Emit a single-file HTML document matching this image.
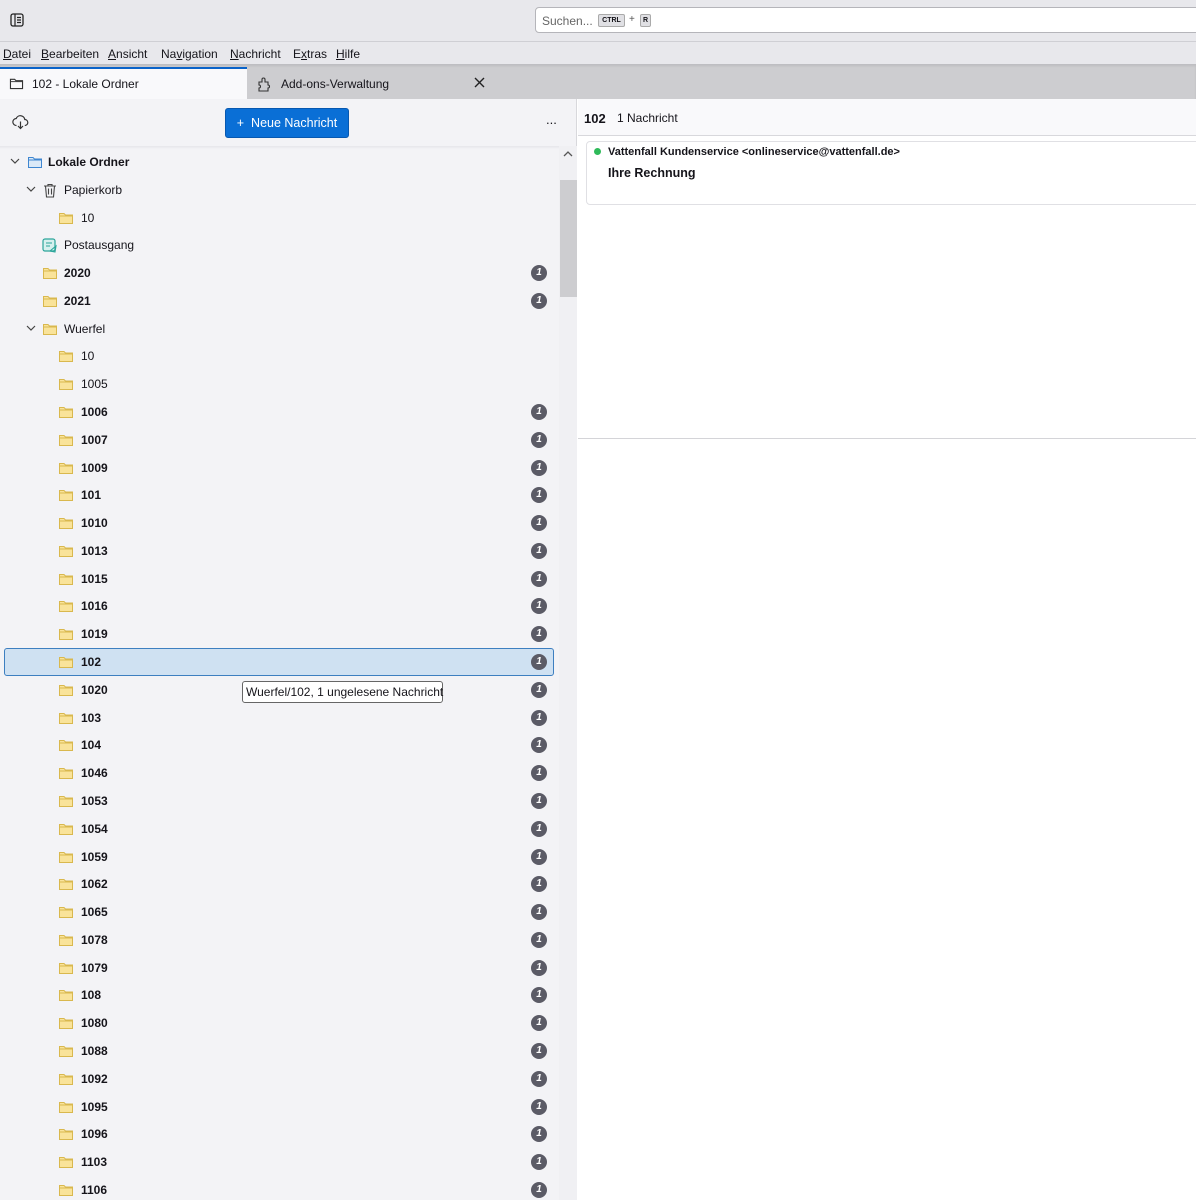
<!DOCTYPE html>
<html><head><meta charset="utf-8"><style>
*{margin:0;padding:0;box-sizing:border-box}
body{width:1196px;height:1200px;overflow:hidden;position:relative;font-family:"Liberation Sans",sans-serif;font-size:12px;color:#15141a;background:#fff}
.abs{position:absolute}
#top{left:0;top:0;width:1196px;height:42px;background:#e8e8ec;border-bottom:1px solid #cfcfd4}
#menu{left:0;top:42px;width:1196px;height:22px;background:#e8e8ec}
#menu span{position:absolute;top:5px;font-size:12px}
#menu u{text-decoration:underline}
#tabs{left:0;top:64px;width:1196px;height:35px;background:#cdcdd0;box-shadow:inset 0 2px 2px rgba(0,0,0,.08)}
#left{left:0;top:99px;width:577px;height:1101px;background:#f3f3f6;border-right:1px solid #d8d8dc}
.r{position:absolute;left:4px;width:549px;height:28px}
.r span{position:absolute;top:7px;font-size:12px}
.r b{font-weight:bold}
.f{position:absolute;top:7px}
.bd{position:absolute;left:527px;top:6px;width:16px;height:16px;border-radius:50%;background:#5b5b66;color:#fff;font-size:10px;font-weight:bold;text-align:center;line-height:16px}
.ch{position:absolute;top:8px}
</style></head><body>
<svg width="0" height="0" style="position:absolute"><defs>
<symbol id="fo" viewBox="0 0 16 14"><path d="M1.5 2.5h4.5l1.5 1.5h7v8.5h-13z" fill="#f9e39a" stroke="#d9b84e"/><path d="M1.5 5h13" stroke="#d9b84e"/></symbol>
<symbol id="chv" viewBox="0 0 10 10"><path d="M1 3l4 4 4-4" fill="none" stroke="#444" stroke-width="1.2"/></symbol>
</defs></svg>

<div id="top" class="abs">
<svg class="abs" style="left:10px;top:13px" width="14" height="14" viewBox="0 0 14 14"><rect x="1" y="1" width="12" height="12" rx="2" fill="none" stroke="#222" stroke-width="1.3"/><path d="M5 1v12M7 4.5h4M7 7h4M7 9.5h4" stroke="#222" stroke-width="1.2"/></svg>
<div class="abs" style="left:535px;top:7px;width:670px;height:26px;background:#fff;border:1px solid #b5b5ba;border-radius:4px">
<span class="abs" style="left:6px;top:6px;color:#666;font-size:12px">Suchen...</span>
<span class="abs" style="left:62px;top:6px;width:27px;height:13px;background:#e0e0e4;border:1px solid #aaa;border-radius:2px;font-size:7px;font-weight:bold;text-align:center;line-height:11px">CTRL</span>
<span class="abs" style="left:93px;top:6px;font-size:10px;color:#555">+</span>
<span class="abs" style="left:104px;top:6px;width:11px;height:13px;background:#e0e0e4;border:1px solid #aaa;border-radius:2px;font-size:7px;font-weight:bold;text-align:center;line-height:11px">R</span>
</div>
</div>
<div id="menu" class="abs">
<span style="left:3px"><u>D</u>atei</span><span style="left:41px"><u>B</u>earbeiten</span><span style="left:108px"><u>A</u>nsicht</span><span style="left:161px">Na<u>v</u>igation</span><span style="left:230px"><u>N</u>achricht</span><span style="left:293px">E<u>x</u>tras</span><span style="left:336px"><u>H</u>ilfe</span>
</div>
<div id="tabs" class="abs">
<div class="abs" style="left:0;top:3px;width:247px;height:32px;background:#f9f9fb;border-top:2px solid #0a63c9"></div>
<svg class="abs" style="left:9px;top:77px;position:fixed" width="15" height="13" viewBox="0 0 16 14"><path d="M1.5 2.5h4.5l1.5 1.5h7v8.5h-13z" fill="none" stroke="#333" stroke-width="1.2"/><path d="M1.5 5h13" stroke="#333"/></svg>
<span class="abs" style="left:32px;top:13px">102 - Lokale Ordner</span>
<svg class="abs" style="left:257px;top:12px" width="17" height="16" viewBox="0 0 17 16"><path d="M2 6h3V3.5a1.5 1.5 0 013 0V6h3v3a1.5 1.5 0 010 3v3H2v-3a1.5 1.5 0 000-3z" fill="none" stroke="#333" stroke-width="1.1"/></svg>
<span class="abs" style="left:281px;top:13px">Add-ons-Verwaltung</span>
<svg class="abs" style="left:474px;top:13px" width="11" height="11" viewBox="0 0 11 11"><path d="M1 1l9 9M10 1l-9 9" stroke="#222" stroke-width="1.4"/></svg>
</div>

<div id="left" class="abs">
<svg class="abs" style="left:12px;top:16px" width="17" height="15" viewBox="0 0 17 15"><path d="M4.5 10.5a3.5 3.5 0 01-.3-7 4.5 4.5 0 018.6 1 2.8 2.8 0 010 6" fill="none" stroke="#333" stroke-width="1.2"/><path d="M8.5 6.5v7M6 11l2.5 2.5L11 11" fill="none" stroke="#333" stroke-width="1.2"/></svg>
<div class="abs" style="left:225px;top:9px;width:124px;height:30px;background:#0a6fd6;border:1px solid #0758b0;border-radius:3px;color:#fff;font-size:12.5px;line-height:28px;text-align:center">+&nbsp;&nbsp;Neue Nachricht</div>
<span class="abs" style="left:546px;top:13px;font-size:13px">...</span>
<div class="abs" style="left:0;top:47px;width:559px;height:3px;background:linear-gradient(#e6e6ea,#f3f3f6)"></div>
<div class="abs" style="left:559px;top:47px;width:18px;height:1054px;background:#f0f0f3"></div>
<svg class="abs" style="left:563px;top:51px" width="10" height="8" viewBox="0 0 10 8"><path d="M1 6l4-4 4 4" fill="none" stroke="#555" stroke-width="1.3"/></svg>
<div class="abs" style="left:560px;top:81px;width:17px;height:117px;background:#cdcdd0"></div>
</div>

<div class="abs" style="left:4px;top:648px;width:550px;height:28px;background:#cfe1f2;border:1px solid #3d7fc0;border-radius:3px"></div>

<div class="r" style="top:148px"><svg class="ch" style="left:6px" width="10" height="10"><use href="#chv"/></svg><svg class="f" style="left:23px" width="16" height="14" viewBox="0 0 16 14"><path d="M1.5 2.5h4.5l1.5 1.5h7v8.5h-13z" fill="#dbe9f7" stroke="#3f86d0"/><path d="M1.5 5h13" stroke="#3f86d0"/></svg><span style="left:44px"><b>Lokale Ordner</b></span></div>
<div class="r" style="top:176px"><svg class="ch" style="left:22px" width="10" height="10"><use href="#chv"/></svg><svg class="f" style="left:39px" width="14" height="15" viewBox="0 0 14 15"><path d="M1 3h12M5 3V1.5h4V3M2.5 3l1 11h7l1-11M5.5 5.5v6M8.5 5.5v6" fill="none" stroke="#444" stroke-width="1.1"/></svg><span style="left:60px">Papierkorb</span></div>
<div class="r" style="top:204px"><svg class="f" style="left:54px" width="16" height="14"><use href="#fo"/></svg><span style="left:77px">10</span></div>
<div class="r" style="top:231px"><svg class="f" style="left:38px" width="16" height="15" viewBox="0 0 16 15"><rect x="1" y="1" width="12" height="12" rx="2" fill="#d6f0ee" stroke="#2ba59a" stroke-width="1.2"/><path d="M4 5h6M4 8h4M8 13l6-5-1 6z" fill="none" stroke="#2ba59a" stroke-width="1.1"/></svg><span style="left:60px">Postausgang</span></div>
<div class="r" style="top:259px"><svg class="f" style="left:38px" width="16" height="14"><use href="#fo"/></svg><span style="left:60px"><b>2020</b></span><i class="bd">1</i></div>
<div class="r" style="top:287px"><svg class="f" style="left:38px" width="16" height="14"><use href="#fo"/></svg><span style="left:60px"><b>2021</b></span><i class="bd">1</i></div>
<div class="r" style="top:315px"><svg class="ch" style="left:22px" width="10" height="10"><use href="#chv"/></svg><svg class="f" style="left:38px" width="16" height="14"><use href="#fo"/></svg><span style="left:60px">Wuerfel</span></div>
<div class="r" style="top:342px"><svg class="f" style="left:54px" width="16" height="14"><use href="#fo"/></svg><span style="left:77px">10</span></div>
<div class="r" style="top:370px"><svg class="f" style="left:54px" width="16" height="14"><use href="#fo"/></svg><span style="left:77px">1005</span></div>
<div class="r" style="top:398px"><svg class="f" style="left:54px" width="16" height="14"><use href="#fo"/></svg><span style="left:77px"><b>1006</b></span><i class="bd">1</i></div>
<div class="r" style="top:426px"><svg class="f" style="left:54px" width="16" height="14"><use href="#fo"/></svg><span style="left:77px"><b>1007</b></span><i class="bd">1</i></div>
<div class="r" style="top:454px"><svg class="f" style="left:54px" width="16" height="14"><use href="#fo"/></svg><span style="left:77px"><b>1009</b></span><i class="bd">1</i></div>
<div class="r" style="top:481px"><svg class="f" style="left:54px" width="16" height="14"><use href="#fo"/></svg><span style="left:77px"><b>101</b></span><i class="bd">1</i></div>
<div class="r" style="top:509px"><svg class="f" style="left:54px" width="16" height="14"><use href="#fo"/></svg><span style="left:77px"><b>1010</b></span><i class="bd">1</i></div>
<div class="r" style="top:537px"><svg class="f" style="left:54px" width="16" height="14"><use href="#fo"/></svg><span style="left:77px"><b>1013</b></span><i class="bd">1</i></div>
<div class="r" style="top:565px"><svg class="f" style="left:54px" width="16" height="14"><use href="#fo"/></svg><span style="left:77px"><b>1015</b></span><i class="bd">1</i></div>
<div class="r" style="top:592px"><svg class="f" style="left:54px" width="16" height="14"><use href="#fo"/></svg><span style="left:77px"><b>1016</b></span><i class="bd">1</i></div>
<div class="r" style="top:620px"><svg class="f" style="left:54px" width="16" height="14"><use href="#fo"/></svg><span style="left:77px"><b>1019</b></span><i class="bd">1</i></div>
<div class="r" style="top:648px"><svg class="f" style="left:54px" width="16" height="14"><use href="#fo"/></svg><span style="left:77px"><b>102</b></span><i class="bd">1</i></div>
<div class="r" style="top:676px"><svg class="f" style="left:54px" width="16" height="14"><use href="#fo"/></svg><span style="left:77px"><b>1020</b></span><i class="bd">1</i></div>
<div class="r" style="top:704px"><svg class="f" style="left:54px" width="16" height="14"><use href="#fo"/></svg><span style="left:77px"><b>103</b></span><i class="bd">1</i></div>
<div class="r" style="top:731px"><svg class="f" style="left:54px" width="16" height="14"><use href="#fo"/></svg><span style="left:77px"><b>104</b></span><i class="bd">1</i></div>
<div class="r" style="top:759px"><svg class="f" style="left:54px" width="16" height="14"><use href="#fo"/></svg><span style="left:77px"><b>1046</b></span><i class="bd">1</i></div>
<div class="r" style="top:787px"><svg class="f" style="left:54px" width="16" height="14"><use href="#fo"/></svg><span style="left:77px"><b>1053</b></span><i class="bd">1</i></div>
<div class="r" style="top:815px"><svg class="f" style="left:54px" width="16" height="14"><use href="#fo"/></svg><span style="left:77px"><b>1054</b></span><i class="bd">1</i></div>
<div class="r" style="top:843px"><svg class="f" style="left:54px" width="16" height="14"><use href="#fo"/></svg><span style="left:77px"><b>1059</b></span><i class="bd">1</i></div>
<div class="r" style="top:870px"><svg class="f" style="left:54px" width="16" height="14"><use href="#fo"/></svg><span style="left:77px"><b>1062</b></span><i class="bd">1</i></div>
<div class="r" style="top:898px"><svg class="f" style="left:54px" width="16" height="14"><use href="#fo"/></svg><span style="left:77px"><b>1065</b></span><i class="bd">1</i></div>
<div class="r" style="top:926px"><svg class="f" style="left:54px" width="16" height="14"><use href="#fo"/></svg><span style="left:77px"><b>1078</b></span><i class="bd">1</i></div>
<div class="r" style="top:954px"><svg class="f" style="left:54px" width="16" height="14"><use href="#fo"/></svg><span style="left:77px"><b>1079</b></span><i class="bd">1</i></div>
<div class="r" style="top:981px"><svg class="f" style="left:54px" width="16" height="14"><use href="#fo"/></svg><span style="left:77px"><b>108</b></span><i class="bd">1</i></div>
<div class="r" style="top:1009px"><svg class="f" style="left:54px" width="16" height="14"><use href="#fo"/></svg><span style="left:77px"><b>1080</b></span><i class="bd">1</i></div>
<div class="r" style="top:1037px"><svg class="f" style="left:54px" width="16" height="14"><use href="#fo"/></svg><span style="left:77px"><b>1088</b></span><i class="bd">1</i></div>
<div class="r" style="top:1065px"><svg class="f" style="left:54px" width="16" height="14"><use href="#fo"/></svg><span style="left:77px"><b>1092</b></span><i class="bd">1</i></div>
<div class="r" style="top:1093px"><svg class="f" style="left:54px" width="16" height="14"><use href="#fo"/></svg><span style="left:77px"><b>1095</b></span><i class="bd">1</i></div>
<div class="r" style="top:1120px"><svg class="f" style="left:54px" width="16" height="14"><use href="#fo"/></svg><span style="left:77px"><b>1096</b></span><i class="bd">1</i></div>
<div class="r" style="top:1148px"><svg class="f" style="left:54px" width="16" height="14"><use href="#fo"/></svg><span style="left:77px"><b>1103</b></span><i class="bd">1</i></div>
<div class="r" style="top:1176px"><svg class="f" style="left:54px" width="16" height="14"><use href="#fo"/></svg><span style="left:77px"><b>1106</b></span><i class="bd">1</i></div>

<div class="abs" style="left:242px;top:681px;width:201px;height:22px;background:#fff;border:1px solid #666;border-radius:3px;font-size:12px;line-height:20px;padding-left:3px;white-space:nowrap">Wuerfel/102, 1 ungelesene Nachricht</div>

<div class="abs" style="left:578px;top:99px;width:618px;height:37px;background:#f9f9fb;border-bottom:1px solid #d8d8dc"></div>
<span class="abs" style="left:584px;top:111px;font-size:13px;font-weight:bold">102</span>
<span class="abs" style="left:617px;top:111px">1 Nachricht</span>
<div class="abs" style="left:586px;top:141px;width:620px;height:64px;background:#fff;border:1px solid #e0e0e4;border-radius:4px"></div>
<div class="abs" style="left:594px;top:148px;width:7px;height:7px;border-radius:50%;background:#2fba5a"></div>
<span class="abs" style="left:608px;top:146px;font-size:11px;font-weight:bold">Vattenfall Kundenservice &lt;onlineservice@vattenfall.de&gt;</span>
<span class="abs" style="left:608px;top:166px;font-size:12.5px;font-weight:bold">Ihre Rechnung</span>
<div class="abs" style="left:578px;top:438px;width:618px;height:1px;background:#d4d4d8"></div>
</body></html>
